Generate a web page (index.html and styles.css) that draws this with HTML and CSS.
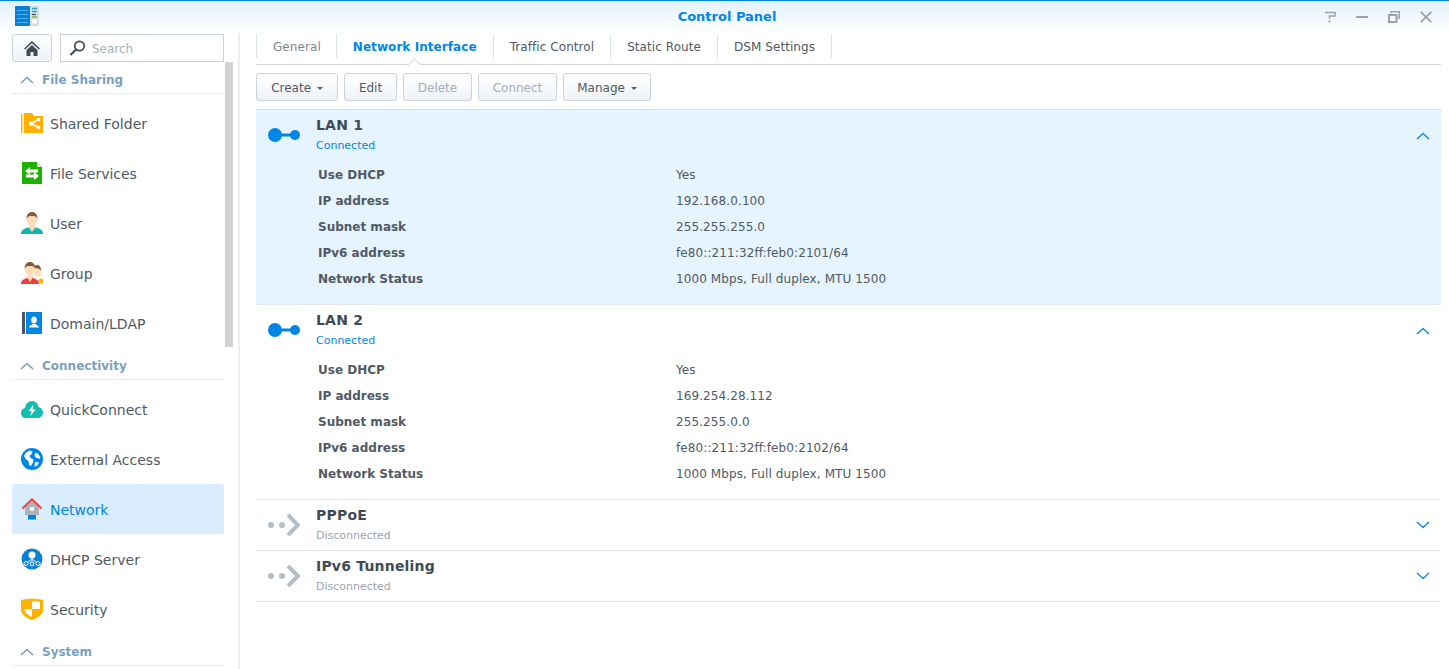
FILE: index.html
```html
<!DOCTYPE html>
<html lang="en">
<head>
    <meta charset="UTF-8">
    <title>Control Panel</title>
    <link rel="stylesheet" href="styles.css">
</head>
<body>
    <div class="window">
        <header class="title-bar">
            <div class="title-left">
                <svg width="24" height="20" viewBox="0 0 24 20">
                    <rect x="0" y="0" width="15" height="20" fill="#0a7fd6"/>
                    <path d="M2 4.500h11M2 8.500h11M2 12.500h11M2 16.500h11" stroke="#49b4f2" stroke-width="1"/>
                    <rect x="15" y="0" width="9" height="20" fill="#d8dfe3"/>
                    <path d="M17 2.500h5M17 5.500h5" stroke="#22a8c9" stroke-width="1.400"/>
                    <path d="M17 8.500h4" stroke="#414b55" stroke-width="1.200"/>
                    <path d="M17 11h5" stroke="#5cb531" stroke-width="1.200"/>
                    <circle cx="19.500" cy="15.500" r="2.500" fill="#fff"/>
                </svg>
            </div>
            <div class="title">Control Panel</div>
            <div class="win-buttons">
                <svg width="12" height="12" viewBox="0 0 12 12"><path d="M1 1.500h10v3.500H5.500v2.500" fill="none" stroke="#9aa3ab" stroke-width="1.500"/><rect x="4.500" y="9.500" width="2" height="2" fill="#9aa3ab"/></svg>
                <svg width="12" height="12" viewBox="0 0 12 12"><rect x="0" y="5" width="12" height="2" fill="#9aa3ab"/></svg>
                <svg width="12" height="12" viewBox="0 0 12 12"><path d="M3 2.500V.7h8.300v6.300H9.500" fill="none" stroke="#9aa3ab" stroke-width="1.400"/><path d="M1 4h7.500v7H1z" fill="none" stroke="#9aa3ab" stroke-width="2"/></svg>
                <svg width="12" height="12" viewBox="0 0 12 12"><path d="M.8.800l10.400 10.400M11.200.800L.8 11.200" stroke="#9aa3ab" stroke-width="1.700"/></svg>
            </div>
        </header>

        <div class="body">
            <aside class="sidebar">
                <div class="side-top">
                    <button class="home-btn">
                        <svg width="16" height="15" viewBox="0 0 16 15"><path d="M8 0L0 7.500l1 1L8 2.200l7 6.300 1-1z" fill="#414b55"/><path d="M2.500 9L8 4l5.500 5v6H9.500v-4h-3v4h-4z" fill="#414b55"/></svg>
                    </button>
                    <div class="search">
                        <svg width="17" height="16" viewBox="0 0 17 16"><circle cx="10.500" cy="6" r="4.700" fill="none" stroke="#414b55" stroke-width="1.700"/><path d="M7 9.500L1.500 15" stroke="#414b55" stroke-width="2.200"/></svg>
                        <span>Search</span>
                    </div>
                </div>
                <div class="side-scroll-area">
                    <nav class="side-list">
                        <div class="group-head"><svg width="14" height="8" viewBox="0 0 14 8"><path d="M1 7l6-5.500L13 7" fill="none" stroke="#7c9fbd" stroke-width="1.600"/></svg>File Sharing</div>
                        <div class="group-items">
                            <a class="side-item">
                                <svg width="22" height="22" viewBox="0 0 22 22"><rect x="0" y="2" width="1.500" height="19" fill="#ffb100"/><path d="M3 1h8l2 3h9v17H3z" fill="#ffb100"/><path d="M17.500 7.500l-7.500 4 7.500 4" fill="none" stroke="#fff" stroke-width="1.500"/><circle cx="10" cy="11.500" r="2.200" fill="#fff"/><circle cx="17.500" cy="7.500" r="1.800" fill="#fff"/><circle cx="17.500" cy="15.500" r="1.800" fill="#fff"/></svg>
                                Shared Folder
                            </a>
                            <a class="side-item">
                                <svg width="22" height="22" viewBox="0 0 22 22"><path d="M1 0h15l5 5v17H1z" fill="#1fb100"/><path d="M16 0v5h5z" fill="#d9f2d2"/><path d="M4 9l5-4v2.500h8v3H9V13zM18 14l-5-4v2.500H5v3h8V18z" fill="#fff"/></svg>
                                File Services
                            </a>
                            <a class="side-item">
                                <svg width="22" height="22" viewBox="0 0 22 22"><path d="M0 22c0-4 3-5.500 7-6.500h8c4 1 7 2.500 7 6.500z" fill="#14b5ad"/><path d="M7.500 15l3.500 5 3.500-5-1-3h-5z" fill="#ffdcb8"/><ellipse cx="11" cy="7.500" rx="5" ry="6.500" fill="#ffdcb8"/><path d="M5.500 8C5 2.500 8 0 11 0s6 2.500 5.500 8C16 5 15 4 11 4S6 5 5.500 8z" fill="#8a5a36"/></svg>
                                User
                            </a>
                            <a class="side-item">
                                <svg width="22" height="22" viewBox="0 0 22 22"><circle cx="20" cy="19" r="2.500" fill="#ffb100"/><ellipse cx="17" cy="9" rx="3.500" ry="6" fill="#ffdcb8"/><path d="M14 4c2-2 6-1 6 5-1-2-3-3-6-3z" fill="#8a5a36"/><path d="M0 22c0-4 3-5 6-6h6c3 1 6 2 6 6z" fill="#ee3f3f"/><path d="M6 15l3 5 3-5-1-3H7z" fill="#ffdcb8"/><ellipse cx="9" cy="7.500" rx="4.800" ry="6.500" fill="#ffdcb8"/><path d="M3.800 8C3 2.500 6 0 9 0s6 2.500 5.200 8C14 5 13 4 9 4S4 5 3.800 8z" fill="#8a5a36"/></svg>
                                Group
                            </a>
                            <a class="side-item">
                                <svg width="22" height="22" viewBox="0 0 22 22"><rect x="1" y="0" width="3" height="22" fill="#4a5667"/><rect x="5" y="0" width="16" height="22" fill="#0086e5"/><ellipse cx="13" cy="8" rx="2.800" ry="3.500" fill="#fff"/><path d="M8 15.500c0-2 3-2.500 3.500-3.500h3c.5 1 3.500 1.500 3.500 3.500z" fill="#fff"/></svg>
                                Domain/LDAP
                            </a>
                        </div>
                        <div class="group-head"><svg width="14" height="8" viewBox="0 0 14 8"><path d="M1 7l6-5.500L13 7" fill="none" stroke="#7c9fbd" stroke-width="1.600"/></svg>Connectivity</div>
                        <div class="group-items">
                            <a class="side-item">
                                <svg width="22" height="22" viewBox="0 0 22 22"><path d="M5 20c-3 0-5-2-5-5 0-2.500 1.500-4.500 4-5 .5-4 3.500-7 7-7s6 2.500 6.500 6c2.500.5 4.500 3 4.500 5.500 0 3-2.500 5.500-5 5.500z" fill="#14bdb1"/><path d="M12.500 6.500L7.500 13h3l-1 5 5-6.500h-3z" fill="#fff"/></svg>
                                QuickConnect
                            </a>
                            <a class="side-item">
                                <svg width="22" height="22" viewBox="0 0 22 22"><circle cx="11" cy="11" r="11" fill="#0086e5"/><path d="M4.500 5l4-2.500 3 1-1 3-2 1 1 2.500 3 1.500-.5 3-2 3.500-2-1-.5-4-2.500-1.500-2-3.500zM14 5l3 .5 2.500 4-1 1.500-2-1-2-.5-1-2.500zM14 14l4 .5-2 3.500-2.500.5z" fill="#fff"/></svg>
                                External Access
                            </a>
                            <a class="side-item active">
                                <svg width="24" height="22" viewBox="0 0 24 22"><path d="M5 9.500L12 3l7 6.500V17H5z" fill="#a9b4bd"/><path d="M2.500 10.500L12 1.500l9.500 9" fill="none" stroke="#ee4545" stroke-width="2.200"/><rect x="10" y="9" width="4" height="4" fill="#eef4f8"/><path d="M0 20h24" stroke="#eef2f5" stroke-width="1.500"/><rect x="8" y="17" width="8" height="4.500" fill="#0086e5"/></svg>
                                Network
                            </a>
                            <a class="side-item">
                                <svg width="22" height="22" viewBox="0 0 22 22"><circle cx="11" cy="11" r="10.500" fill="#0a7fd6"/><circle cx="11" cy="7" r="3.500" fill="#fff"/><path d="M11 9v6M11 11l-5.500 4M11 11l5.500 4" stroke="#fff" stroke-width="1"/><circle cx="5" cy="15.500" r="2" fill="#0a7fd6" stroke="#fff"/><circle cx="11" cy="16" r="2" fill="#0a7fd6" stroke="#fff"/><circle cx="17" cy="15.500" r="2" fill="#0a7fd6" stroke="#fff"/></svg>
                                DHCP Server
                            </a>
                            <a class="side-item">
                                <svg width="22" height="22" viewBox="0 0 22 22"><path d="M0 2Q11-1 22 2v10c0 4-5 8-11 10C5 20 0 16 0 12z" fill="#ffb100"/><path d="M11 3Q15 3 19 4V11h-8zM11 11v8c-3-1.500-7-4-8-8z" fill="#fff"/></svg>
                                Security
                            </a>
                        </div>
                        <div class="group-head"><svg width="14" height="8" viewBox="0 0 14 8"><path d="M1 7l6-5.500L13 7" fill="none" stroke="#7c9fbd" stroke-width="1.600"/></svg>System</div>
                    </nav>
                    <div class="side-scroll"></div>
                </div>
            </aside>

            <main class="content">
                <nav class="tabs">
                    <a class="tab muted">General</a>
                    <a class="tab active">Network Interface</a>
                    <a class="tab">Traffic Control</a>
                    <a class="tab">Static Route</a>
                    <a class="tab">DSM Settings</a>
                </nav>

                <div class="toolbar">
                    <button class="btn btn-create">Create <i class="caret"></i></button>
                    <button class="btn btn-edit">Edit</button>
                    <button class="btn btn-delete" disabled>Delete</button>
                    <button class="btn btn-connect" disabled>Connect</button>
                    <button class="btn btn-manage">Manage <i class="caret"></i></button>
                </div>

                <section class="iface selected">
                    <div class="iface-head">
                        <svg class="iface-icon" width="32" height="14" viewBox="0 0 32 14"><circle cx="7" cy="7" r="7" fill="#0086e5"/><rect x="12" y="5.500" width="12" height="3" fill="#0086e5"/><circle cx="27" cy="7" r="5" fill="#0086e5"/></svg>
                        <div class="iface-name">
                            <div class="name">LAN 1</div>
                            <div class="state on">Connected</div>
                        </div>
                        <svg class="chevron" width="14" height="8" viewBox="0 0 14 8"><path d="M1 7l6-5.500L13 7" fill="none" stroke="#1a8fe8" stroke-width="1.600"/></svg>
                    </div>
                    <div class="info"><span class="label">Use DHCP</span><span>Yes</span></div>
                    <div class="info"><span class="label">IP address</span><span>192.168.0.100</span></div>
                    <div class="info"><span class="label">Subnet mask</span><span>255.255.255.0</span></div>
                    <div class="info"><span class="label">IPv6 address</span><span>fe80::211:32ff:feb0:2101/64</span></div>
                    <div class="info"><span class="label">Network Status</span><span>1000 Mbps, Full duplex, MTU 1500</span></div>
                </section>

                <section class="iface">
                    <div class="iface-head">
                        <svg class="iface-icon" width="32" height="14" viewBox="0 0 32 14"><circle cx="7" cy="7" r="7" fill="#0086e5"/><rect x="12" y="5.500" width="12" height="3" fill="#0086e5"/><circle cx="27" cy="7" r="5" fill="#0086e5"/></svg>
                        <div class="iface-name">
                            <div class="name">LAN 2</div>
                            <div class="state on">Connected</div>
                        </div>
                        <svg class="chevron" width="14" height="8" viewBox="0 0 14 8"><path d="M1 7l6-5.500L13 7" fill="none" stroke="#1a8fe8" stroke-width="1.600"/></svg>
                    </div>
                    <div class="info"><span class="label">Use DHCP</span><span>Yes</span></div>
                    <div class="info"><span class="label">IP address</span><span>169.254.28.112</span></div>
                    <div class="info"><span class="label">Subnet mask</span><span>255.255.0.0</span></div>
                    <div class="info"><span class="label">IPv6 address</span><span>fe80::211:32ff:feb0:2102/64</span></div>
                    <div class="info"><span class="label">Network Status</span><span>1000 Mbps, Full duplex, MTU 1500</span></div>
                </section>

                <section class="iface closed">
                    <div class="iface-head">
                        <svg class="iface-icon" width="32" height="24" viewBox="0 0 32 24"><circle cx="3" cy="12" r="3" fill="#b4bec8"/><circle cx="14" cy="12" r="3" fill="#b4bec8"/><path d="M20 2l10 10-10 10" fill="none" stroke="#b4bec8" stroke-width="4"/></svg>
                        <div class="iface-name">
                            <div class="name">PPPoE</div>
                            <div class="state">Disconnected</div>
                        </div>
                        <svg class="chevron" width="14" height="8" viewBox="0 0 14 8"><path d="M1 1l6 5.500L13 1" fill="none" stroke="#1a8fe8" stroke-width="1.600"/></svg>
                    </div>
                </section>

                <section class="iface closed">
                    <div class="iface-head">
                        <svg class="iface-icon" width="32" height="24" viewBox="0 0 32 24"><circle cx="3" cy="12" r="3" fill="#b4bec8"/><circle cx="14" cy="12" r="3" fill="#b4bec8"/><path d="M20 2l10 10-10 10" fill="none" stroke="#b4bec8" stroke-width="4"/></svg>
                        <div class="iface-name">
                            <div class="name">IPv6 Tunneling</div>
                            <div class="state">Disconnected</div>
                        </div>
                        <svg class="chevron" width="14" height="8" viewBox="0 0 14 8"><path d="M1 1l6 5.500L13 1" fill="none" stroke="#1a8fe8" stroke-width="1.600"/></svg>
                    </div>
                </section>
            </main>
        </div>
    </div>
</body>
</html>
```

FILE: styles.css
```css
html, body {
    height: 100%;
}
body {
    margin: 0;
    font-family: "DejaVu Sans", sans-serif;
    font-size: 12px;
    color: #505a64;
    background-color: #fff;
    overflow: hidden;
}
.window {
    height: 100vh;
    display: flex;
    flex-direction: column;
    overflow: hidden;
}
svg {
    flex: none;
    display: block;
}

/* title bar */
.title-bar {
    flex: none;
    height: 33px;
    box-sizing: border-box;
    border-top: 1px solid #0086e5;
    background: linear-gradient(#e2f1fd, #fff);
    display: grid;
    grid-template-columns: 1fr auto 1fr;
    align-items: center;
}
.title-left {
    padding: 0 0 5px 15px;
    margin-top: 3px;
}
.title {
    font-size: 13px;
    font-weight: bold;
    color: #0086e5;
    padding-left: 5px;
    padding-bottom: 1px;
}
.win-buttons {
    display: flex;
    justify-content: flex-end;
    gap: 20px;
    padding: 0 17px 0 0;
}

.body {
    flex: 1;
    min-height: 0;
    display: flex;
}

/* sidebar */
.sidebar {
    flex: none;
    width: 226px;
    padding-left: 12px;
    padding-top: 1px;
    border-right: 2px solid #eceef0;
}
.side-top {
    display: flex;
    gap: 8px;
    width: 212px;
    height: 28px;
}
.home-btn {
    width: 40px;
    height: 28px;
    padding: 0;
    border: 1px solid #c8d3de;
    border-radius: 3px;
    background: linear-gradient(#fff, #eef3f8);
    display: flex;
    align-items: center;
    justify-content: center;
}
.search {
    flex: 1;
    box-sizing: border-box;
    border: 1px solid #c8d3de;
    display: flex;
    align-items: center;
    gap: 6px;
    padding-left: 8px;
    color: #a5b0ba;
}
.search span {
    padding-top: 2px;
}
.side-scroll-area {
    display: flex;
    align-items: flex-start;
}
.side-list {
    width: 212px;
    padding-top: 1px;
}
.side-scroll {
    width: 8px;
    height: 285px;
    margin-left: 1px;
    background-color: #d1d3d5;
}
.group-head {
    box-sizing: border-box;
    height: 31px;
    border-bottom: 1px solid #e8ebee;
    display: flex;
    align-items: center;
    gap: 8px;
    padding-left: 8px;
    padding-top: 4px;
    font-weight: bold;
    color: #7a9fc0;
}
.group-head svg {
    margin-top: -1px;
}
.group-items {
    padding: 4px 0 1px;
}
.side-item {
    box-sizing: border-box;
    height: 50px;
    display: flex;
    align-items: center;
    gap: 7px;
    padding-left: 9px;
    padding-top: 1px;
    font-size: 14px;
    color: #505a64;
    border-radius: 3px;
}
.side-item svg {
    margin-top: -1px;
}
.side-item.active {
    background-color: #d9edff;
    color: #0086e5;
    gap: 6px;
    padding-left: 8px;
}

/* tabs */
.content {
    flex: 1;
    min-width: 0;
    padding: 1px 8px 0 16px;
}
.tabs {
    box-sizing: border-box;
    display: flex;
    height: 31px;
    align-items: flex-start;
    border-bottom: 1px solid #d5d9dd;
}
.tab {
    height: 24px;
    line-height: 27px;
    padding: 0 16px;
    border-left: 1px solid #dbe2e8;
    color: #505a64;
    letter-spacing: .07px;
}
.tab:last-child {
    border-right: 1px solid #dbe2e8;
}
.tab.muted {
    color: #7e878f;
    padding-right: 15px;
}
.tab.active {
    color: #0086e5;
    font-weight: bold;
    position: relative;
    height: 30px;
    background: linear-gradient(#dbe2e8, #dbe2e8) left top / 1px 24px no-repeat;
    border-left: none;
    padding-left: 17px;
}
.tab.active::after {
    content: "";
    position: absolute;
    left: 50%;
    bottom: -5px;
    width: 8px;
    height: 8px;
    margin-left: -4px;
    background-color: #fff;
    border-left: 1px solid #d5d9dd;
    border-top: 1px solid #d5d9dd;
    transform: rotate(45deg);
}

/* toolbar */
.toolbar {
    display: flex;
    gap: 6px;
    margin-top: 8px;
    height: 28px;
}
.btn {
    box-sizing: border-box;
    height: 28px;
    padding: 2px 0 0;
    border: 1px solid #c8d3de;
    border-radius: 3px;
    background: linear-gradient(#fff, #eef3f8);
    font-family: inherit;
    font-size: 12px;
    color: #505a64;
}
.btn:disabled {
    color: #a5adb5;
}
.btn-create { width: 82px; }
.btn-edit { width: 53px; }
.btn-delete { width: 69px; }
.btn-connect { width: 79px; }
.btn-manage { width: 88px; }
.caret {
    display: inline-block;
    width: 0;
    height: 0;
    margin-left: 2px;
    vertical-align: 2px;
    border-left: 3px solid transparent;
    border-right: 3px solid transparent;
    border-top: 3px solid #505a64;
}

/* interface list */
.iface {
    padding-bottom: 13px;
    border-bottom: 1px solid #e3e9ee;
}
.iface.selected {
    margin-top: 8px;
    background-color: #e6f4ff;
    border-top: 1px solid #d0dfea;
}
.iface.closed {
    padding-bottom: 0;
}
.iface-head {
    height: 51px;
    display: flex;
    align-items: center;
    padding-left: 12px;
}
.iface-icon {
    margin-bottom: 1px;
}
.closed .iface-head {
    height: 50px;
}
.closed .iface-icon {
    margin-bottom: 0;
}
.iface-name {
    flex: 1;
    margin-left: 16px;
    align-self: flex-start;
    padding-top: 6px;
}
.name {
    font-size: 14px;
    font-weight: bold;
    letter-spacing: .2px;
    color: #414b55;
    height: 18px;
    line-height: 18px;
}
.state {
    font-size: 11px;
    color: #9ba5af;
    height: 16px;
    line-height: 16px;
    margin-top: 4px;
}
.state.on {
    color: #0086e5;
}
.chevron {
    margin-right: 11px;
}
.info {
    box-sizing: border-box;
    height: 26px;
    display: flex;
    align-items: center;
    padding-left: 62px;
    padding-top: 2px;
    letter-spacing: .1px;
}
.label {
    width: 358px;
    font-weight: bold;
    letter-spacing: 0;
}
```
